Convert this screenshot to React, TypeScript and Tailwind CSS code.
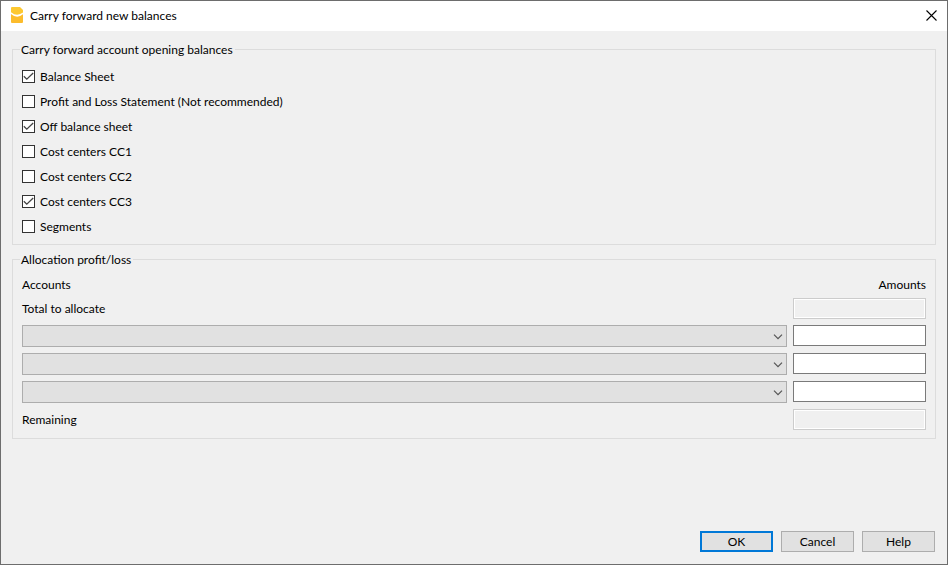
import { useState } from 'react';
import type { ReactNode } from 'react';

interface CarryOption {
  id: string;
  label: string;
  checked: boolean;
}

const initialOptions: CarryOption[] = [
  { id: 'balance-sheet', label: 'Balance Sheet', checked: true },
  { id: 'profit-loss', label: 'Profit and Loss Statement (Not recommended)', checked: false },
  { id: 'off-balance', label: 'Off balance sheet', checked: true },
  { id: 'cc1', label: 'Cost centers CC1', checked: false },
  { id: 'cc2', label: 'Cost centers CC2', checked: false },
  { id: 'cc3', label: 'Cost centers CC3', checked: true },
  { id: 'segments', label: 'Segments', checked: false },
];

const allocationRows = [1, 2, 3];

const AppIcon = () => (
  <svg className="h-4 w-3 shrink-0" viewBox="0 0 12 16" aria-hidden="true">
    <path d="M1 0h8l3 3v2.6Q6 10 0 5.2V1Q0 0 1 0Z" fill="#fdc830" />
    <path d="M0 6.9Q6 12.2 12 7.3V15q0 1-1 1H1q-1 0-1-1Z" fill="#fcbc2c" />
  </svg>
);

const CheckBox = ({ option, onToggle }: { option: CarryOption; onToggle: (id: string) => void }) => (
  <div className="flex h-[25px] items-center">
    <span className="relative flex h-[13px] w-[13px]">
      <input
        id={option.id}
        type="checkbox"
        checked={option.checked}
        onChange={() => onToggle(option.id)}
        className="h-[13px] w-[13px] appearance-none border border-[#333] bg-white"
      />
      {option.checked && (
        <svg className="pointer-events-none absolute inset-0 h-[13px] w-[13px]" viewBox="0 0 13 13" aria-hidden="true">
          <path d="M1.8 6.2 4.8 9.2 11.2 3" fill="none" stroke="#444" strokeWidth="1.3" />
        </svg>
      )}
    </span>
    <label htmlFor={option.id} className="pl-[5px]">
      {option.label}
    </label>
  </div>
);

const GroupBox = ({ title, children }: { title: string; children: ReactNode }) => (
  <fieldset className="min-w-0 border border-[#dcdcdc] px-[9px]">
    <legend className="-ml-0.5 h-[17px] pr-0.5 pl-px leading-[18px]">{title}</legend>
    {children}
  </fieldset>
);

const AccountSelect = ({ row }: { row: number }) => (
  <div className="relative">
    <select
      disabled
      aria-label={`Account ${row}`}
      className="block h-[22px] w-full appearance-none border border-[#adadad] bg-[#e1e1e1] px-1 opacity-100"
    />
    <svg className="pointer-events-none absolute top-2 right-1 h-2 w-[10px]" viewBox="0 0 10 8" aria-hidden="true">
      <path d="M1 1.7 5 5.7 9 1.7" fill="none" stroke="#555" strokeWidth="1.2" />
    </svg>
  </div>
);

const ReadOnlyAmount = ({ id }: { id: string }) => (
  <input
    id={id}
    disabled
    className="h-[21px] w-full border border-[#ccc] bg-[#f0f0f0] px-1 text-right inset-ring inset-ring-white"
  />
);

export default function App() {
  const [options, setOptions] = useState(initialOptions);

  const toggle = (id: string) => {
    setOptions((prev) => prev.map((o) => (o.id === id ? { ...o, checked: !o.checked } : o)));
  };

  return (
    <div className="flex min-h-screen flex-col border border-[#6d6d6d] bg-[#f0f0f0] font-[Lato,sans-serif] text-[12px] leading-4 text-black">
      <header className="flex h-[30px] items-center bg-white px-2.5 pb-0.5">
        <AppIcon />
        <h1 className="flex-1 pt-0.5 pl-[7px]">Carry forward new balances</h1>
        <button type="button" aria-label="Close">
          <svg className="h-[11px] w-[11px]" viewBox="0 0 11 11" aria-hidden="true">
            <path d="M.5.5l10 10M10.5.5l-10 10" stroke="#000" strokeWidth="1.1" />
          </svg>
        </button>
      </header>

      <main className="flex flex-1 flex-col gap-1.5 px-[11px] pt-2.5">
        <GroupBox title="Carry forward account opening balances">
          <div className="pt-1.5 pb-[5px]">
            {options.map((option) => (
              <CheckBox key={option.id} option={option} onToggle={toggle} />
            ))}
          </div>
        </GroupBox>

        <GroupBox title="Allocation profit/loss">
          <div className="grid grid-cols-[1fr_133px] gap-1.5 pt-2.5 pb-2">
            <span className="leading-[14px]">Accounts</span>
            <span className="text-right leading-[14px]">Amounts</span>

            <label htmlFor="total" className="self-center">
              Total to allocate
            </label>
            <ReadOnlyAmount id="total" />

            {allocationRows.map((row) => (
              <div key={row} className="contents">
                <AccountSelect row={row} />
                <input
                  aria-label={`Amount ${row}`}
                  className="h-[21px] w-full border border-[#7a7a7a] bg-white px-1 text-right"
                />
              </div>
            ))}

            <label htmlFor="remaining" className="self-center">
              Remaining
            </label>
            <ReadOnlyAmount id="remaining" />
          </div>
        </GroupBox>
      </main>

      <footer className="flex justify-end gap-2 px-3 pb-3">
        <button type="button" className="h-[21px] w-[73px] border-2 border-[#0078d7] bg-[#e1e1e1]">
          OK
        </button>
        <button type="button" className="h-[21px] w-[73px] border border-[#adadad] bg-[#e1e1e1]">
          Cancel
        </button>
        <button type="button" className="h-[21px] w-[73px] border border-[#adadad] bg-[#e1e1e1]">
          Help
        </button>
      </footer>
    </div>
  );
}
